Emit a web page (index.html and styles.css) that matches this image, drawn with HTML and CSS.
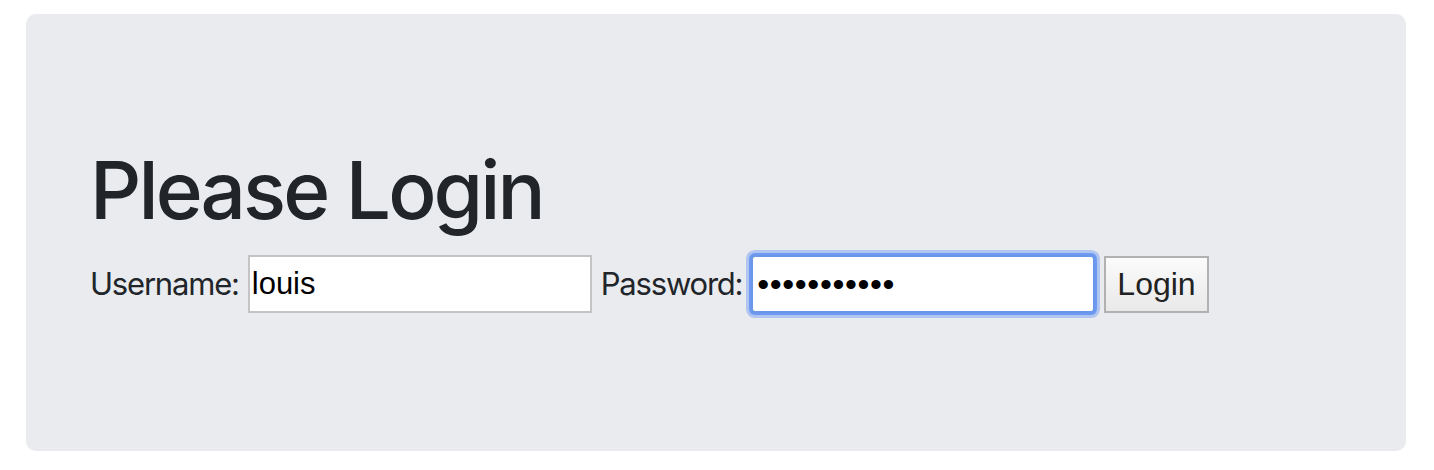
FILE: index.html
```html
<!DOCTYPE html>
<html lang="en">
<head>
<meta charset="utf-8">
<title>Please Login</title>
<link rel="stylesheet" href="styles.css">
</head>
<body>
<div class="page">
  <div class="jumbotron">
    <h1 class="title">Please Login</h1>
    <form class="login-row" onsubmit="return false">
      <label class="label" for="user">Username:</label>
      <input class="field" id="user" type="text" value="louis">
      <label class="label" for="pass">Password:</label>
      <input class="field is-focused" id="pass" type="password" value="louispasswd">
      <button class="btn" type="submit">Login</button>
    </form>
  </div>
</div>
</body>
</html>
```

FILE: styles.css
```css
html, body {
  margin: 0;
  padding: 0;
  background: #ffffff;
}

.page {
  padding: 14px 28px 19px 26px;
}

.jumbotron {
  box-sizing: border-box;
  height: 437px;
  background: #e9ebef;
  border-radius: 10px;
  padding: 128px 64px 0 64px;
  font-family: Inter, "Liberation Sans", sans-serif;
  color: #212529;
}

.title {
  margin: 0 0 17px 0;
  font-size: 80px;
  font-weight: 500;
  line-height: 96px;
  letter-spacing: -2.9px;
}

.login-row {
  display: flex;
  align-items: center;
  gap: 9px;
  height: 58px;
}

.label {
  font-size: 31px;
  line-height: 40px;
  letter-spacing: -1.2px;
  color: #212529;
}

.field {
  box-sizing: border-box;
  width: 344px;
  height: 58px;
  margin: 0;
  padding: 0 2px;
  border: 2px solid #c4c4c6;
  background: #ffffff;
  font-family: "Liberation Sans", Arial, sans-serif;
  font-size: 31px;
  color: #000000;
  outline: none;
  border-radius: 0;
}

.field[type="password"] {
  font-size: 34px;
  letter-spacing: 0.6px;
  padding-left: 4px;
}

.is-focused {
  border-color: #6a97ec;
  border-radius: 4px;
  box-shadow: 0 0 0 2px #6d9af0, 0 0 0 5px rgba(120, 160, 240, 0.5);
}

.btn {
  box-sizing: border-box;
  height: 57px;
  margin: 1px 0 0 0;
  padding: 0 11px;
  border: 2px solid #b1b1b1;
  background: linear-gradient(#fbfbfb, #e9e9e9);
  font-family: "Liberation Sans", Arial, sans-serif;
  font-size: 32px;
  color: #222222;
  border-radius: 0;
}
```
